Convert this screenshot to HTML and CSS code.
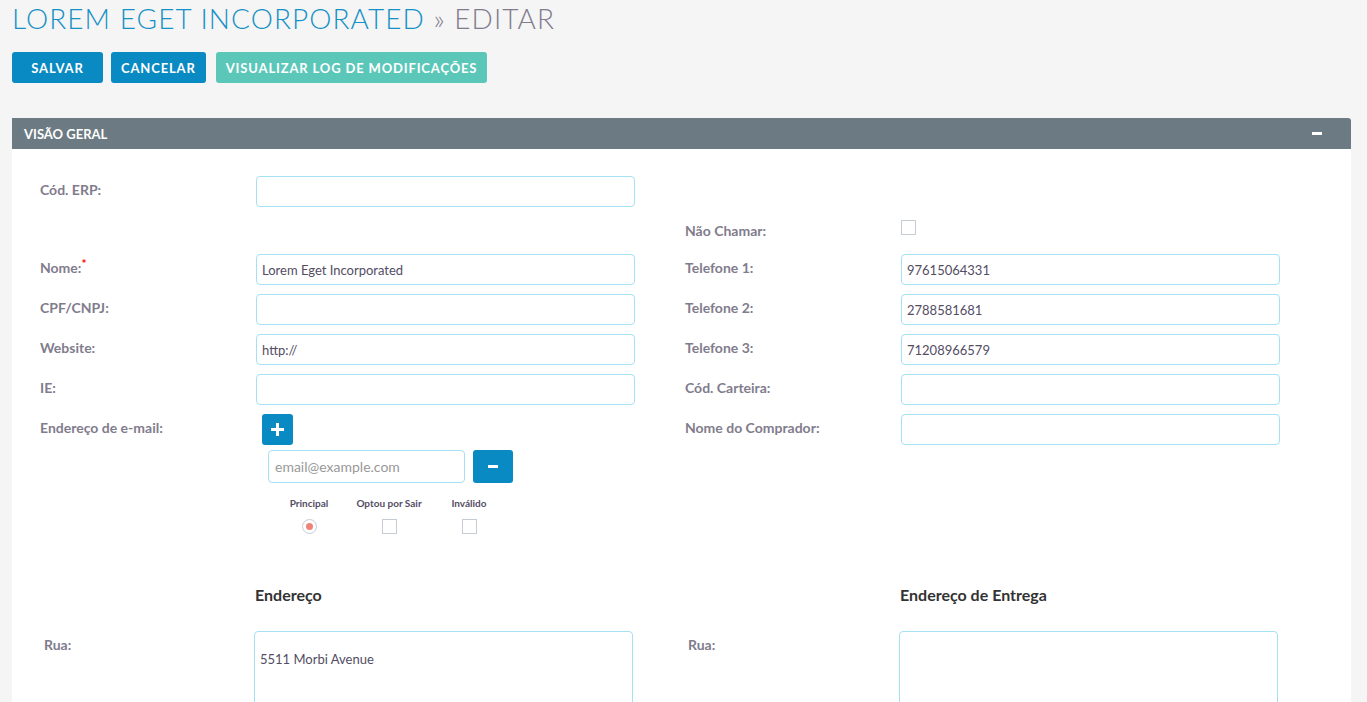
FILE: index.html
```html
<!DOCTYPE html>
<html lang="pt">
<head>
  <meta charset="UTF-8">
  <title>Lorem Eget Incorporated » Editar</title>
  <link rel="stylesheet" href="styles.css">
</head>
<body>
  <div class="page">
    <h2 class="module-title">Lorem Eget Incorporated <span class="crumb">» Editar</span></h2>

    <div class="action-buttons">
      <button class="btn">Salvar</button>
      <button class="btn">Cancelar</button>
      <button class="btn btn-teal">Visualizar Log de Modificações</button>
    </div>

    <div class="panel">
      <div class="panel-heading">
        <span>Visão Geral</span>
        <span class="collapse-icon"></span>
      </div>

      <div class="panel-body">
        <div class="edit-grid">
          <label class="field-label">Cód. ERP:</label>
          <input class="field-input" type="text">
          <span></span>
          <span></span>

          <span class="row-short"></span>
          <span class="row-short"></span>
          <label class="field-label row-short">Não Chamar:</label>
          <div class="row-short"><span class="checkbox"></span></div>

          <label class="field-label">Nome:<span class="required">*</span></label>
          <input class="field-input" type="text" value="Lorem Eget Incorporated">
          <label class="field-label">Telefone 1:</label>
          <input class="field-input" type="text" value="97615064331">

          <label class="field-label">CPF/CNPJ:</label>
          <input class="field-input" type="text">
          <label class="field-label">Telefone 2:</label>
          <input class="field-input" type="text" value="2788581681">

          <label class="field-label">Website:</label>
          <input class="field-input" type="text" value="http://">
          <label class="field-label">Telefone 3:</label>
          <input class="field-input" type="text" value="71208966579">

          <label class="field-label">IE:</label>
          <input class="field-input" type="text">
          <label class="field-label">Cód. Carteira:</label>
          <input class="field-input" type="text">

          <label class="field-label">Endereço de e-mail:</label>
          <div class="email-block">
            <button class="icon-btn add-btn"><span class="plus"></span></button>
            <div class="email-line">
              <input class="email-input" type="text" placeholder="email@example.com">
              <button class="icon-btn remove-btn"><span class="minus"></span></button>
            </div>
            <div class="email-flags">
              <div class="flag">
                <span class="flag-label">Principal</span>
                <span class="radio"><span class="radio-dot"></span></span>
              </div>
              <div class="flag">
                <span class="flag-label">Optou por Sair</span>
                <span class="checkbox"></span>
              </div>
              <div class="flag">
                <span class="flag-label">Inválido</span>
                <span class="checkbox"></span>
              </div>
            </div>
          </div>
          <label class="field-label">Nome do Comprador:</label>
          <input class="field-input" type="text">
        </div>

        <div class="address-grid">
          <span></span>
          <h4 class="address-title">Endereço</h4>
          <span></span>
          <h4 class="address-title">Endereço de Entrega</h4>

          <label class="field-label">Rua:</label>
          <textarea class="address-input">5511 Morbi Avenue</textarea>
          <label class="field-label">Rua:</label>
          <textarea class="address-input"></textarea>
        </div>
      </div>
    </div>
  </div>
</body>
</html>
```

FILE: styles.css
```css
* {
  margin: 0;
  padding: 0;
  box-sizing: border-box;
}

body {
  font-family: Lato, "Open Sans", sans-serif;
  background-color: #f5f5f5;
  color: #534d64;
}

.page {
  padding: 0 16px 0 12px;
}

.module-title {
  font-size: 28px;
  line-height: 36px;
  font-weight: 300;
  text-transform: uppercase;
  letter-spacing: 1.05px;
  color: #1591c6;
}

.module-title .crumb {
  color: #817c8d;
}

.action-buttons {
  display: flex;
  gap: 8px;
  margin-top: 16px;
}

.btn {
  height: 31px;
  min-width: 91px;
  padding: 0 10px;
  border: none;
  border-radius: 3px;
  background-color: #0a8ac2;
  color: #fff;
  font-family: Lato, sans-serif;
  font-size: 13px;
  font-weight: 700;
  letter-spacing: 0.85px;
  text-transform: uppercase;
  cursor: pointer;
}

.btn-teal {
  margin-left: 2px;
  background-color: #5bc7b9;
}

.panel {
  margin-top: 35px;
  background-color: #fff;
}

.panel-heading {
  display: flex;
  justify-content: space-between;
  align-items: center;
  height: 31px;
  padding: 0 29px 0 12px;
  background-color: #6c7b83;
  color: #fff;
  font-size: 13px;
  font-weight: 700;
  text-transform: uppercase;
  border-top-right-radius: 3px;
}

.collapse-icon {
  width: 10px;
  height: 3px;
  background-color: #fff;
}

.panel-body {
  padding: 27px 0 40px 28px;
}

/* label | input | label | input, right half shifted by 50px */
.edit-grid {
  display: grid;
  grid-template-columns: 216px 379px 266px 379px;
  row-gap: 9px;
}

.edit-grid > :nth-child(4n+3) {
  margin-left: 50px;
}

.field-label {
  font-size: 14px;
  font-weight: 700;
  line-height: 28px;
  color: #817c8d;
  align-self: start;
}

.required {
  color: #ff0000;
  font-size: 12px;
  vertical-align: top;
  line-height: 20px;
}

.row-short {
  height: 29px;
  line-height: 29px;
}

.row-short .checkbox {
  margin-top: 4px;
}

.field-input {
  height: 31px;
  width: 379px;
  border: 1px solid #a5e1f5;
  border-radius: 4px;
  padding: 0 5px;
  font-family: Lato, sans-serif;
  font-size: 13px;
  color: #534d64;
  background: #fff;
  outline: none;
}

.checkbox {
  display: block;
  width: 15px;
  height: 15px;
  border: 1px solid #c5ccd3;
  background: #fff;
}

.email-block {
  padding-left: 6px;
}

.icon-btn {
  display: flex;
  justify-content: center;
  align-items: center;
  border: none;
  border-radius: 3px;
  background-color: #0a8ac2;
  cursor: pointer;
}

.add-btn {
  width: 31px;
  height: 31px;
}

.plus {
  position: relative;
  width: 13px;
  height: 13px;
}

.plus::before,
.plus::after {
  content: "";
  position: absolute;
  background: #fff;
}

.plus::before {
  left: 0;
  top: 5px;
  width: 13px;
  height: 3px;
}

.plus::after {
  left: 5px;
  top: 0;
  width: 3px;
  height: 13px;
}

.email-line {
  display: flex;
  gap: 8px;
  margin-top: 5px;
  padding-left: 6px;
}

.email-input {
  width: 197px;
  height: 33px;
  border: 1px solid #a5e1f5;
  border-radius: 4px;
  padding: 0 6px;
  font-family: Lato, sans-serif;
  font-size: 14px;
  outline: none;
}

.email-input::placeholder {
  color: #999;
}

.remove-btn {
  width: 40px;
  height: 33px;
}

.minus {
  width: 10px;
  height: 3px;
  background: #fff;
}

.email-flags {
  display: flex;
  margin-top: 12px;
  padding-left: 7px;
}

.flag {
  width: 80px;
  display: flex;
  flex-direction: column;
  align-items: center;
  gap: 8px;
}

.flag-label {
  font-size: 10px;
  font-weight: 700;
  line-height: 16px;
  color: #534d64;
}

.radio {
  display: flex;
  justify-content: center;
  align-items: center;
  width: 15px;
  height: 15px;
  border: 1px solid #c5ccd3;
  border-radius: 50%;
  background: #fff;
}

.radio-dot {
  width: 7px;
  height: 7px;
  border-radius: 50%;
  background-color: #f08377;
}

.address-grid {
  display: grid;
  grid-template-columns: 210px 379px 266px 379px;
  row-gap: 26px;
  margin-top: 51px;
  padding-left: 4px;
}

.address-grid > :nth-child(4n+3) {
  margin-left: 55px;
}

.address-title {
  font-size: 16px;
  font-weight: 700;
  line-height: 20px;
  color: #333;
  padding-left: 1px;
}

.address-input {
  width: 379px;
  height: 110px;
  border: 1px solid #a5e1f5;
  border-radius: 4px;
  padding: 19px 5px;
  font-family: Lato, sans-serif;
  font-size: 13px;
  color: #534d64;
  resize: none;
  outline: none;
}
```
